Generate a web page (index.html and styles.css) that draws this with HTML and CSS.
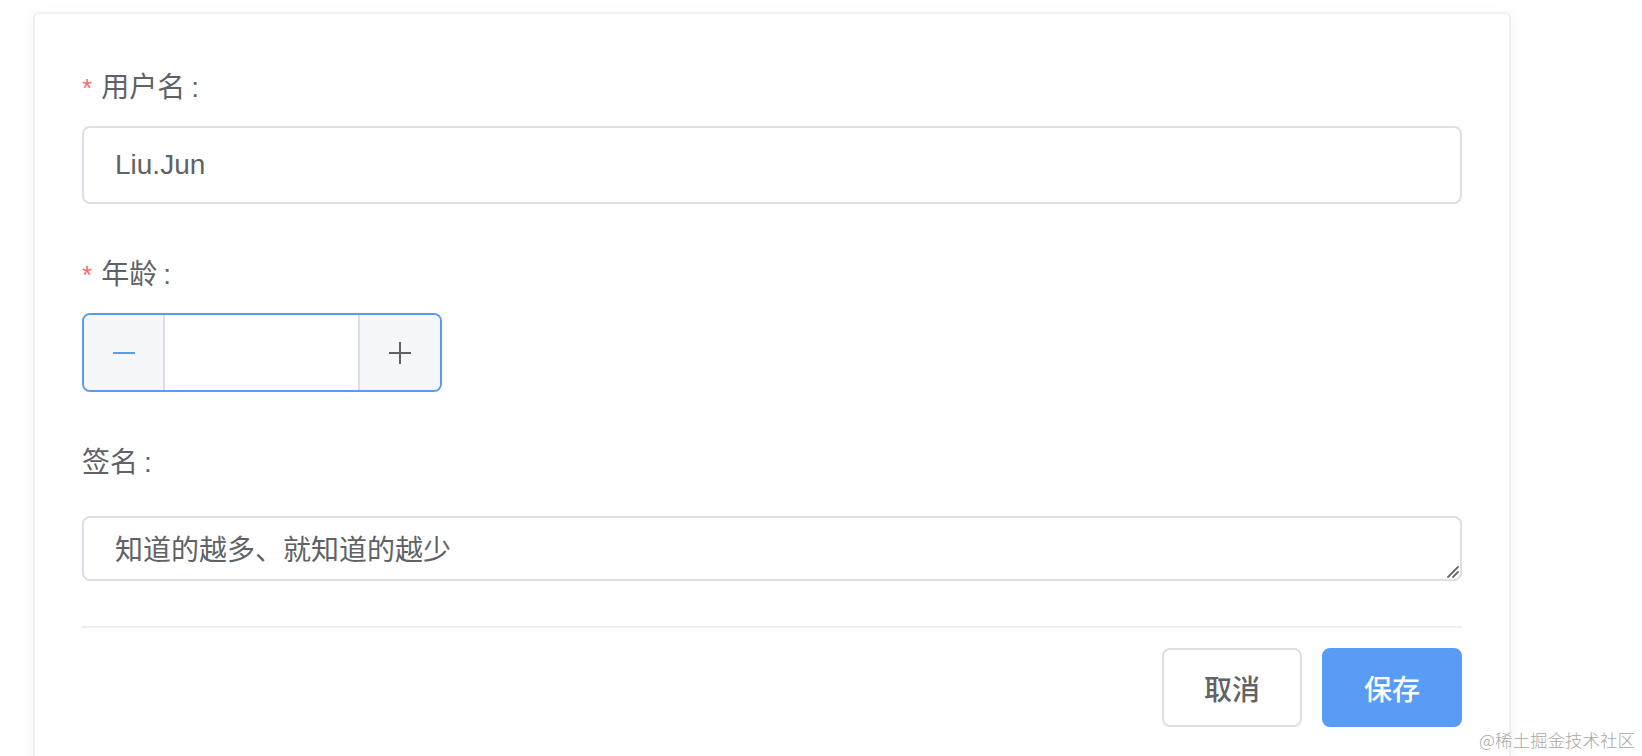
FILE: index.html
```html
<!DOCTYPE html>
<html lang="zh-CN">
<head>
<meta charset="utf-8">
<title>表单</title>
<link rel="stylesheet" href="styles.css">
</head>
<body>
<div class="card">
  <form class="form">
    <div class="form-item">
      <label class="label"><span class="req">*</span>用户名<span class="colon">:</span></label>
      <div class="control">
        <input class="input" type="text" value="Liu.Jun">
      </div>
    </div>
    <div class="form-item">
      <label class="label"><span class="req">*</span>年龄<span class="colon">:</span></label>
      <div class="control">
        <div class="number is-focus">
          <span class="num-btn num-minus">
            <svg width="22" height="2" viewBox="0 0 22 2"><rect x="0" y="0" width="22" height="2" fill="currentColor"/></svg>
          </span>
          <input class="num-input" type="text" value="">
          <span class="num-btn num-plus">
            <svg width="22" height="22" viewBox="0 0 22 22"><rect x="0" y="10" width="22" height="2" fill="currentColor"/><rect x="10" y="0" width="2" height="22" fill="currentColor"/></svg>
          </span>
        </div>
      </div>
    </div>
    <div class="form-item form-item--textarea">
      <label class="label">签名<span class="colon">:</span></label>
      <div class="control textarea-wrap">
        <textarea class="textarea" rows="1">知道的越多、就知道的越少</textarea>
        <svg class="resizer" width="14" height="14" viewBox="0 0 14 14"><line x1="3" y1="13" x2="13" y2="3" stroke="#6b6b6b" stroke-width="1.8" stroke-linecap="round"/><line x1="8" y1="13" x2="13" y2="8" stroke="#6b6b6b" stroke-width="1.8" stroke-linecap="round"/></svg>
      </div>
    </div>
    <div class="divider"></div>
    <div class="actions">
      <button type="button" class="btn">取消</button>
      <button type="button" class="btn btn-primary">保存</button>
    </div>
  </form>
</div>
<div class="watermark">@稀土掘金技术社区</div>
</body>
</html>
```

FILE: styles.css
```css
* { box-sizing: border-box; }

html, body {
  margin: 0;
  padding: 0;
  background: #ffffff;
  overflow: hidden;
}

body {
  font-family: "Liberation Sans", "Noto Sans CJK SC", sans-serif;
  color: #606266;
  height: 756px;
  position: relative;
}

.card {
  margin: 12px 0 0 33px;
  width: 1478px;
  background: #fff;
  border: 2px solid #eef0f4;
  border-radius: 6px;
  box-shadow: 0 2px 14px rgba(0, 0, 0, 0.05);
  padding: 54px 47px 60px 47px;
}

.form-item {
  margin-bottom: 51px;
}

.label {
  display: block;
  font-size: 28px;
  line-height: 40px;
  height: 40px;
  color: #606266;
  margin-bottom: 18px;
}

.colon {
  margin-left: 6px;
}

.form-item--textarea .label {
  margin-bottom: 33px;
}

.req {
  color: #f56c6c;
  font-size: 26px;
  margin-right: 9px;
}

.input {
  display: block;
  width: 100%;
  height: 78px;
  border: 2px solid #dcdfe6;
  border-radius: 8px;
  padding: 0 31px;
  font-family: "Liberation Sans", "Noto Sans CJK SC", sans-serif;
  font-size: 28px;
  color: #606266;
  outline: none;
  background: #fff;
}

.number {
  display: flex;
  width: 360px;
  height: 79px;
  border: 2px solid #5a9cec;
  border-radius: 8px;
  overflow: hidden;
  background: #fff;
}

.num-btn {
  display: flex;
  align-items: center;
  justify-content: center;
  background: #f5f7fa;
  flex: none;
}

.num-minus {
  width: 81px;
  border-right: 2px solid #dcdfe6;
  color: #5a9cec;
}

.num-plus {
  width: 82px;
  border-left: 2px solid #dcdfe6;
  color: #606266;
}

.num-input {
  flex: 1;
  min-width: 0;
  border: none;
  outline: none;
  font-size: 28px;
  text-align: center;
  color: #606266;
  background: #fff;
}

.textarea-wrap {
  position: relative;
}

.textarea {
  display: block;
  width: 100%;
  height: 65px;
  border: 2px solid #dcdfe6;
  border-radius: 8px;
  padding: 12px 31px 8px 31px;
  font-family: "Liberation Sans", "Noto Sans CJK SC", sans-serif;
  font-size: 28px;
  line-height: 41px;
  color: #606266;
  outline: none;
  resize: none;
  overflow: hidden;
  background: #fff;
}

.resizer {
  position: absolute;
  right: 3px;
  bottom: 3px;
}

.divider {
  height: 2px;
  background: #ebeef5;
  margin-top: -6px;
  margin-bottom: 20px;
}

.actions {
  display: flex;
  justify-content: flex-end;
  gap: 20px;
}

.btn {
  width: 140px;
  height: 79px;
  border: 2px solid #dcdfe6;
  border-radius: 8px;
  background: #fff;
  color: #606266;
  font-family: "Liberation Sans", "Noto Sans CJK SC", sans-serif;
  font-size: 28px;
  font-weight: 500;
  padding: 0;
  cursor: pointer;
}

.btn-primary {
  background: #599cf6;
  border-color: #599cf6;
  color: #fff;
}

.watermark {
  position: absolute;
  right: 7px;
  bottom: 6px;
  font-family: "Noto Sans CJK SC", sans-serif;
  font-size: 17.5px;
  line-height: 20px;
  color: #a8a8a8;
  text-shadow: 0 0 2px #fff, 0 0 1px #fff;
  font-weight: 300;
}
```
